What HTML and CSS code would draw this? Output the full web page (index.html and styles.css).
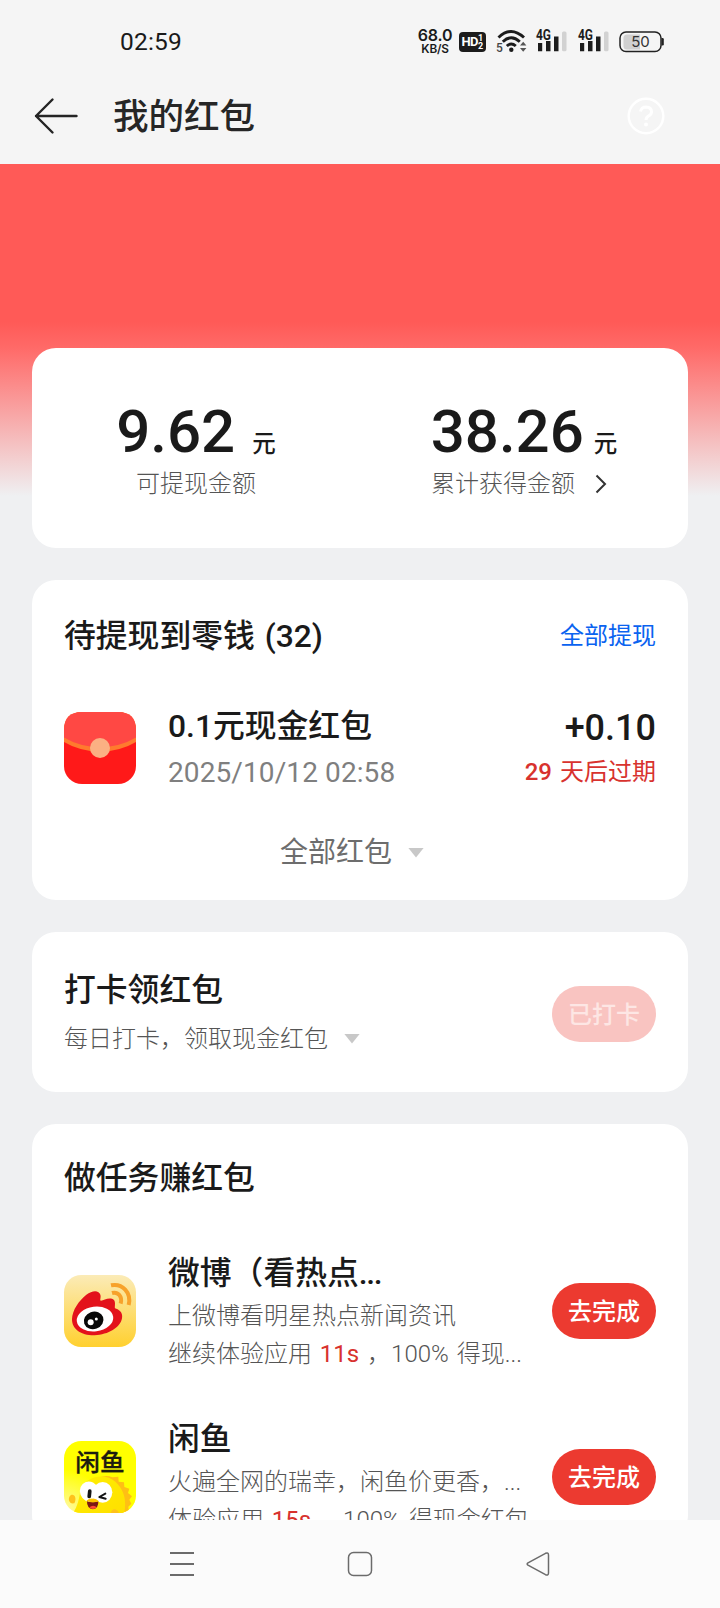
FILE: index.html
```html
<!DOCTYPE html>
<html lang="zh-CN">
<head>
<meta charset="utf-8">
<meta name="viewport" content="width=device-width, initial-scale=1">
<title>我的红包</title>
<link rel="stylesheet" href="styles.css">
</head>
<body>
<div class="phone">
  <div class="status">
    <span class="clock">02:59</span>
    <div class="status-icons">
      <div class="net"><span class="net-val">68.0</span><span class="net-unit">KB/S</span></div>
      <div class="hd"><span class="hd-t">HD</span><span class="hd-n"><span>1</span><span>2</span></span></div>
      <svg class="wifi" width="32" height="24" viewBox="0 0 32 24"><g fill="none" stroke="#1c1c1c" stroke-width="2.900"><path d="M2.500 8.500Q15 -3.600 28 8.500"/><path d="M6.800 12.800Q15.200 4.800 23.800 12.800"/><path d="M10.800 17Q15.300 13 19.800 17"/></g><circle cx="15.300" cy="20.700" r="2.200" fill="#1c1c1c"/><text x="0" y="22.800" class="wifi-n">5</text><path d="M24 16.500l3.200-3.800 3.200 3.800zM24 19l3.200 3.800 3.200-3.800z" fill="#555"/></svg>
      <svg class="sig" width="32" height="24" viewBox="0 0 32 24"><text x="0" y="10.800" class="sig-t" textLength="15" lengthAdjust="spacingAndGlyphs">4G</text><path d="M2 14h4.200v8.300H2zM10 12h4.500v10.300H10zM18 7.500h4.500v14.800H18z" fill="#1c1c1c"/><rect x="26" y="2.500" width="4.500" height="19.800" rx="1.500" fill="#d2d2d2"/></svg>
      <svg class="sig" width="32" height="24" viewBox="0 0 32 24"><text x="0" y="10.800" class="sig-t" textLength="15" lengthAdjust="spacingAndGlyphs">4G</text><path d="M2 14h4.200v8.300H2zM10 12h4.500v10.300H10zM18 7.500h4.500v14.800H18z" fill="#1c1c1c"/><rect x="26" y="2.500" width="4.500" height="19.800" rx="1.500" fill="#d2d2d2"/></svg>
      <svg class="bat" width="46" height="22" viewBox="0 0 46 22"><path d="M8 3.500H21V18.500H8Q4.500 18.500 4.500 15V7Q4.500 3.500 8 3.500Z" fill="#d0d0d0"/><rect x="1" y="1" width="41" height="19.500" rx="6" fill="none" stroke="#222" stroke-width="1.500"/><path d="M42.500 7h1q1.300 0 1.300 1.300v4.900q0 1.300-1.300 1.300h-1z" fill="#222"/><text x="21.500" y="16.300" text-anchor="middle" class="bat-t">50</text></svg>
    </div>
  </div>
  <header class="titlebar">
    <svg class="back" width="44" height="36" viewBox="0 0 44 36"><path d="M18.500 1.500L2 18l16.500 16.500M2 18h40.500" fill="none" stroke="#242424" stroke-width="2.400" stroke-linecap="round" stroke-linejoin="round"/></svg>
    <h1>我的红包</h1>
    <svg class="help" width="40" height="40" viewBox="0 0 40 40"><circle cx="20" cy="20" r="17.300" fill="none" stroke="#fff" stroke-width="2.500"/><path d="M14.500 15.500Q15.500 11 20 11Q25.500 11.300 25.500 16Q25.500 18.300 22.500 20Q20 21.500 20 24" fill="none" stroke="#fff" stroke-width="3"/><circle cx="20" cy="28.500" r="2" fill="#fff"/></svg>
  </header>

  <main class="content">
    <section class="card balance">
      <div class="col">
        <p class="amount"><b>9.62</b><span class="unit wide">元</span></p>
        <p class="label">可提现金额</p>
      </div>
      <div class="col">
        <p class="amount"><b>38.26</b><span class="unit">元</span></p>
        <p class="label total">累计获得金额<svg class="chev" width="12" height="20" viewBox="0 0 12 20"><path d="M1.500 1.500L10 10l-8.500 8.500" fill="none" stroke="#333" stroke-width="2"/></svg></p>
      </div>
    </section>

    <section class="card pending">
      <div class="head"><h2>待提现到零钱 <span class="count">(32)</span></h2><a class="all">全部提现</a></div>
      <div class="packet">
        <svg class="icon" viewBox="0 0 72 72"><rect width="72" height="72" rx="18" fill="#ff1919"/><path d="M0 30V18Q0 0 18 0H54Q72 0 72 18V30Q56 39.500 36 39.500T0 30Z" fill="#ff7a2e"/><path d="M0 25.500V18Q0 0 18 0H54Q72 0 72 18V25.500Q56 35 36 35T0 25.500Z" fill="#ff4844"/><circle cx="36" cy="36" r="10" fill="#fbb083"/></svg>
        <div class="info"><h3>0.1元现金红包</h3><p class="date">2025/10/12 02:58</p></div>
        <div class="sum"><p class="plus">+0.10</p><p class="expire"><span class="days">29</span>天后过期</p></div>
      </div>
      <div class="more">全部红包<i class="tri"></i></div>
    </section>

    <section class="card checkin">
      <div class="info"><h2>打卡领红包</h2><p class="sub">每日打卡，领取现金红包<i class="tri"></i></p></div>
      <button class="btn done">已打卡</button>
    </section>

    <section class="card tasks">
      <h2>做任务赚红包</h2>
      <div class="task">
        <svg class="icon" viewBox="0 0 216 216"><defs><linearGradient id="wb" x2="0" y2="1"><stop offset="0" stop-color="#fbebb7"/><stop offset="1" stop-color="#ffd02f"/></linearGradient></defs><rect width="216" height="216" rx="52" fill="url(#wb)"/><path d="M24 132C25 105 44 78 67 59C85 45 105 45 109 59C112 67 106 76 111 77C119 76 130 68 144 71C158 75 151 94 153 100C163 103 178 111 174 130C169 158 133 179 92 181C53 182 23 163 24 132Z" fill="#e3121b"/><ellipse cx="93" cy="132" rx="55" ry="37" transform="rotate(-7 93 132)" fill="#fff"/><ellipse cx="89" cy="136" rx="30" ry="26" transform="rotate(-20 89 136)" fill="#080808"/><circle cx="80" cy="142" r="9" fill="#fff"/><circle cx="97" cy="132" r="4.500" fill="#fff"/><g fill="none" stroke="#f7a22b" stroke-width="12"><path d="M141 31C175 24 203 53 194 90"/><path d="M144 54C162 49 176 65 170 86"/></g></svg>
        <div class="info">
          <h3>微博（看热点<span class="dots">...</span></h3>
          <p class="desc">上微博看明星热点新闻资讯</p>
          <p class="desc">继续体验应用 <em>11s</em> ，<span class="pct">100%</span> 得现<span>...</span></p>
        </div>
        <button class="btn">去完成</button>
      </div>
      <div class="task">
        <svg class="icon" viewBox="0 0 216 216"><defs><clipPath id="xc"><rect width="216" height="216" rx="52"/></clipPath><radialGradient id="xg" cx="0" cy="1" r=".6"><stop offset="0" stop-color="#fff9b0"/><stop offset="1" stop-color="#ffff00"/></radialGradient><linearGradient id="xf" x2="1" y2="1"><stop offset="0" stop-color="#fff000"/><stop offset="1" stop-color="#ffdf00"/></linearGradient></defs><g clip-path="url(#xc)"><rect width="216" height="216" fill="url(#xg)"/><path d="M98 115Q122 98 145 109L163 107L164 122L180 124L181 138L196 143L192 156L204 166L196 176L202 188L193 197L196 220H120Z" fill="#ffbf14"/><path d="M24 220C42 197 45 173 50 145C68 102 126 96 154 122C183 148 188 182 180 220Z" fill="url(#xf)"/><path d="M31 187C13 191 10 169 21 162C32 158 39 172 31 187Z" fill="#ffc21b"/><path d="M140 216C143 202 158 200 165 216Z" fill="#ffc21b"/><ellipse cx="76" cy="152" rx="28" ry="31" fill="#fff" transform="rotate(-20 76 152)"/><ellipse cx="116" cy="154" rx="29" ry="31" fill="#fff"/><rect x="71" y="145" width="11" height="27" rx="5.500" fill="#151515" transform="rotate(6 76 158)"/><path d="M124 158L106 168L125 173" fill="none" stroke="#151515" stroke-width="6" stroke-linecap="round" stroke-linejoin="round"/><path d="M69 181Q86 187 103 181Q104 202 87 205Q68 202 69 181Z" fill="#7b1814"/><path d="M76 199Q87 190 99 199Q87 209 76 199Z" fill="#ff4a36"/><path d="M67 179Q78 171 84 173Q95 171 105 181Q85 188 67 179Z" fill="#ffc400"/><text x="34" y="90" textLength="148" lengthAdjust="spacingAndGlyphs" class="xy">闲鱼</text></g></svg>
        <div class="info">
          <h3>闲鱼</h3>
          <p class="desc">火遍全网的瑞幸，闲鱼价更香，<span>...</span></p>
          <p class="desc">体验应用 <em>15s</em> ，<span class="pct">100%</span> 得现金红包</p>
        </div>
        <button class="btn">去完成</button>
      </div>
    </section>
  </main>

  <nav class="navbar">
    <svg width="26" height="26" viewBox="0 0 26 26"><path d="M1 2h24M1 13h24M1 24h24" stroke="#6b6b6b" stroke-width="1.800"/></svg>
    <svg width="26" height="26" viewBox="0 0 26 26"><rect x="1.500" y="1.500" width="23" height="23" rx="5" fill="none" stroke="#6b6b6b" stroke-width="1.500"/></svg>
    <svg width="26" height="26" viewBox="0 0 26 26"><path d="M3 11.800L20.500 2.300Q23.500 1 23.500 4V22Q23.500 25 20.500 23.700L3 14.200Q1.300 13 3 11.800Z" fill="none" stroke="#6b6b6b" stroke-width="1.500"/></svg>
  </nav>
</div>
</body>
</html>
```
FILE: styles.css
```css
* { box-sizing: border-box; margin: 0; padding: 0; }
body { font-family: Roboto, "Noto Sans CJK SC", sans-serif; color: #1a1a1a; background: #eff0f2; }
i, em { font-style: normal; }
svg { display: block; flex: none; overflow: visible; }
.phone { width: 720px; height: 1608px; display: flex; flex-direction: column; overflow: hidden; }

.status { height: 72px; flex: none; background: #f5f5f5; display: flex; justify-content: space-between; padding: 0 55px 0 120px; }
.clock { font-size: 24.500px; line-height: 84px; height: 72px; letter-spacing: 0.2px; }
.status-icons { display: flex; align-items: flex-start; }
.net { width: 36px; padding-top: 28px; display: flex; flex-direction: column; align-items: center; }
.net-val { font: 600 16px/15px Inter, sans-serif; letter-spacing: -0.2px; }
.net-unit { font: 600 11.800px/12px Inter, sans-serif; letter-spacing: -0.2px; }
.hd { width: 27px; height: 20px; margin: 32px 2px 0 6px; border-radius: 4px; background: #1c1c1c; color: #fff; display: flex; align-items: center; padding-left: 2.500px; font-weight: 700; }
.hd-t { font-size: 13px; line-height: 20px; width: 16.500px; letter-spacing: -0.8px; }
.hd-n { display: flex; flex-direction: column; font-size: 9px; line-height: 8.500px; }
.wifi { margin: 29px 0 0 8px; }
.wifi-n { font: 500 12px Roboto, sans-serif; fill: #444; }
.sig { margin: 29px 0 0 8px; }
.sig + .sig { margin-left: 10px; }
.sig-t { font: 700 14px Roboto, sans-serif; fill: #1c1c1c; }
.bat { margin: 31px 0 0 9px; }
.bat-t { font: 400 15px Inter, sans-serif; fill: #333; }

.titlebar { height: 92px; flex: none; background: #f5f5f5; display: flex; align-items: center; padding: 0 54px 4px 34px; }
.titlebar h1 { font-size: 35.500px; line-height: 48px; font-weight: 500; color: #262626; margin-left: 35px; padding-top: 2px; flex: 1; }

.content { flex: 1; min-height: 0; overflow: hidden; display: flex; flex-direction: column; gap: 32px; padding: 184px 32px 0; background: linear-gradient(#ff5a57 0, #ff5a57 158px, #ff6a68 184px, #eff0f2 332px); }
.card { background: #fff; border-radius: 24px; flex: none; }
h2, h3 { font-size: 31.800px; line-height: 44px; font-weight: 500; white-space: nowrap; }
.count { margin-left: 2px; }

.balance { height: 200px; padding-top: 48px; display: flex; }
.col { flex: 1; display: flex; flex-direction: column; align-items: center; }
.amount { line-height: 72px; height: 72px; white-space: nowrap; }
.amount b { font-size: 60px; font-weight: 500; }
.unit { font-size: 23.500px; font-weight: 500; margin-left: 10px; }
.unit.wide { margin-left: 17px; }
.label { display: flex; align-items: center; font-size: 24px; line-height: 32px; color: #555; font-weight: 300; }
.total { padding-right: 10px; }
.chev { margin-left: 20px; }

.pending { height: 320px; padding: 34px 32px 0; }
.head { display: flex; justify-content: space-between; align-items: center; height: 44px; }
.all { color: #0a63f0; font-size: 24px; line-height: 32px; }
.packet { display: flex; align-items: flex-start; margin-top: 46px; height: 100px; }
.icon { width: 72px; height: 72px; margin: 8px 32px 0 0; }
.info { flex: 1; min-width: 0; }
.date { font-size: 28px; line-height: 44px; margin-top: 3px; color: #7f7f7f; letter-spacing: 0.1px; }
.sum { text-align: right; }
.plus { font-size: 36px; font-weight: 500; line-height: 48px; }
.expire { font-size: 24px; line-height: 41px; color: #d8322e; }
.days { font-weight: 500; margin-right: 8px; }
.more { display: flex; justify-content: center; align-items: center; font-size: 28px; line-height: 40px; color: #6d6d6d; margin: 29px 16px 0 0; }
.tri { flex: none; width: 16px; height: 10px; margin: -1px 0 0 16px; background: #c8c8c8; clip-path: polygon(0 0, 100% 0, 50% 100%); }

.checkin { height: 160px; padding: 36px 32px 0; display: flex; }
.sub { display: flex; align-items: center; font-size: 24px; line-height: 36px; margin-top: 9px; color: #555; font-weight: 300; }
.btn { flex: none; width: 104px; height: 56px; border: 0; border-radius: 28px; background: #ec3a30; color: #fff; font: 500 24px/56px Roboto, "Noto Sans CJK SC", sans-serif; padding-top: 1px; }
.done { background: #f9c4c1; color: #fde6e4; margin-top: 18px; }

.tasks { padding: 32px 32px 0; }
.task { display: flex; height: 122px; margin-top: 51px; }
.task + .task { margin-top: 44px; }
.task .icon { margin-top: 24px; }
.task .btn { margin-top: 32px; }
.dots { letter-spacing: -1.300px; }
.desc { font-size: 24px; line-height: 38px; color: #555; font-weight: 300; white-space: nowrap; word-spacing: 2px; }
.desc:nth-child(2) { margin-top: 2px; }
.desc em { color: #d8322e; font-weight: 400; }
.xy { font: 500 72px "Noto Sans CJK SC", sans-serif; fill: #1c1c10; stroke: #1c1c10; stroke-width: 1px; }

.navbar { height: 88px; flex: none; background: #fbfbfb; display: flex; justify-content: space-between; padding: 31px 169.500px 0 168.500px; }
```
